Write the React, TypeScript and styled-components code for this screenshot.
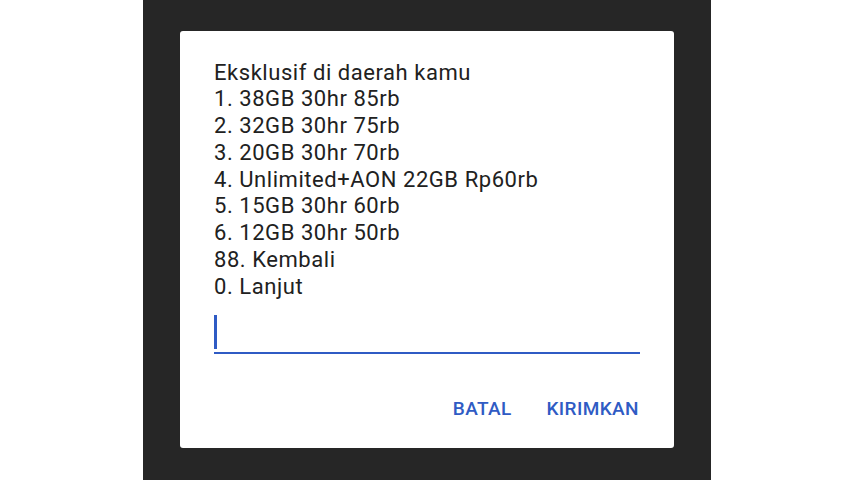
import React from "react";
import styled, { createGlobalStyle } from "styled-components";

const Global = createGlobalStyle`
  html, body { margin: 0; padding: 0; background: #ffffff; }
  body { font-family: Roboto, "Noto Sans", Arial, sans-serif; }
`;

const Page = styled.div`
  width: 854px;
  height: 480px;
  display: flex;
  justify-content: center;
  background: #ffffff;
  overflow: hidden;
`;

const Panel = styled.div`
  width: 568px;
  height: 480px;
  background: #262626;
  box-sizing: border-box;
  padding: 31px 0 0 37px;
`;

const Dialog = styled.div`
  width: 494px;
  height: 417px;
  background: #ffffff;
  border-radius: 3px;
  box-sizing: border-box;
  padding: 28.5px 34px 0 34px;
  display: flex;
  flex-direction: column;
`;

const Message = styled.div`
  font-family: Roboto, sans-serif;
  font-size: 22px;
  letter-spacing: 0.55px;
  line-height: 26.75px;
  color: #212121;
`;

const Line = styled.div`
  white-space: nowrap;
`;

const InputWrap = styled.div`
  margin-top: 11.5px;
  padding-top: 3px;
  padding-bottom: 3px;
  border-bottom: 2px solid #2f5bc4;
`;

const Caret = styled.div`
  width: 3px;
  height: 34px;
  background: #2f5bc4;
`;

const Actions = styled.div`
  margin-top: 45.5px;
  display: flex;
  justify-content: flex-end;
  gap: 34.6px;
  padding-right: 1px;
`;

const ActionButton = styled.button`
  border: none;
  background: none;
  padding: 0;
  font-family: Roboto, sans-serif;
  font-weight: 500;
  font-size: 19px;
  letter-spacing: 0.4px;
  line-height: 20px;
  color: #2f5bc4;
  cursor: pointer;
`;

const lines = [
  "Eksklusif di daerah kamu",
  "1. 38GB 30hr 85rb",
  "2. 32GB 30hr 75rb",
  "3. 20GB 30hr 70rb",
  "4. Unlimited+AON 22GB Rp60rb",
  "5. 15GB 30hr 60rb",
  "6. 12GB 30hr 50rb",
  "88. Kembali",
  "0. Lanjut",
];

export default function App() {
  return (
    <>
      <Global />
      <Page>
        <Panel>
          <Dialog>
            <Message>
              {lines.map((l) => (
                <Line key={l}>{l}</Line>
              ))}
            </Message>
            <InputWrap>
              <Caret />
            </InputWrap>
            <Actions>
              <ActionButton>BATAL</ActionButton>
              <ActionButton>KIRIMKAN</ActionButton>
            </Actions>
          </Dialog>
        </Panel>
      </Page>
    </>
  );
}
